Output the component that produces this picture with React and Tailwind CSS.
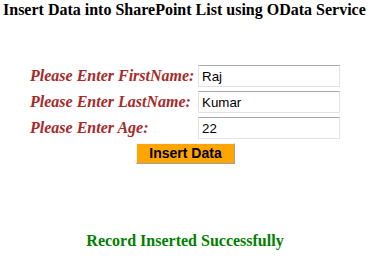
export default function App() {
  const rows = [
    { label: "Please Enter FirstName:", value: "Raj" },
    { label: "Please Enter LastName:", value: "Kumar" },
    { label: "Please Enter Age:", value: "22" },
  ];

  return (
    <div className="w-[376px] h-[259px] bg-white font-['Liberation_Serif',serif]">
      <h1 className="pl-[3px] pt-[1px] text-[16px] leading-[18px] font-bold text-black whitespace-nowrap">
        Insert Data into SharePoint List using OData Service
      </h1>

      <div className="ml-[30px] mt-[46px] w-[310px]">
        <div className="grid grid-cols-[164px_142px] gap-x-[4px] gap-y-[4px] items-center">
          {rows.map((row) => (
            <div key={row.label} className="contents">
              <label className="text-[16px] leading-[18px] font-bold italic text-[#a52a2a] whitespace-nowrap">
                {row.label}
              </label>
              <input
                readOnly
                value={row.value}
                className="h-[22px] w-[142px] px-[3px] border border-[#e3e3e3] border-t-[#a8a8a8] bg-white text-[13.33px] text-black font-['Liberation_Sans',Arial,sans-serif] outline-none"
              />
            </div>
          ))}
        </div>

        <div className="flex justify-center mt-[4px] pl-[1px]">
          <button className="w-[99px] h-[21px] bg-[#ffa500] border border-[#f4f4f4] border-r-[#a0a0a0] border-b-[#a0a0a0] text-[14px] leading-[17px] font-bold text-black font-['Liberation_Sans',Arial,sans-serif]">
            Insert Data
          </button>
        </div>
      </div>

      <p className="w-[370px] mt-[68px] text-center text-[16px] leading-[18px] font-bold text-[#008000]">
        Record Inserted Successfully
      </p>
    </div>
  );
}
